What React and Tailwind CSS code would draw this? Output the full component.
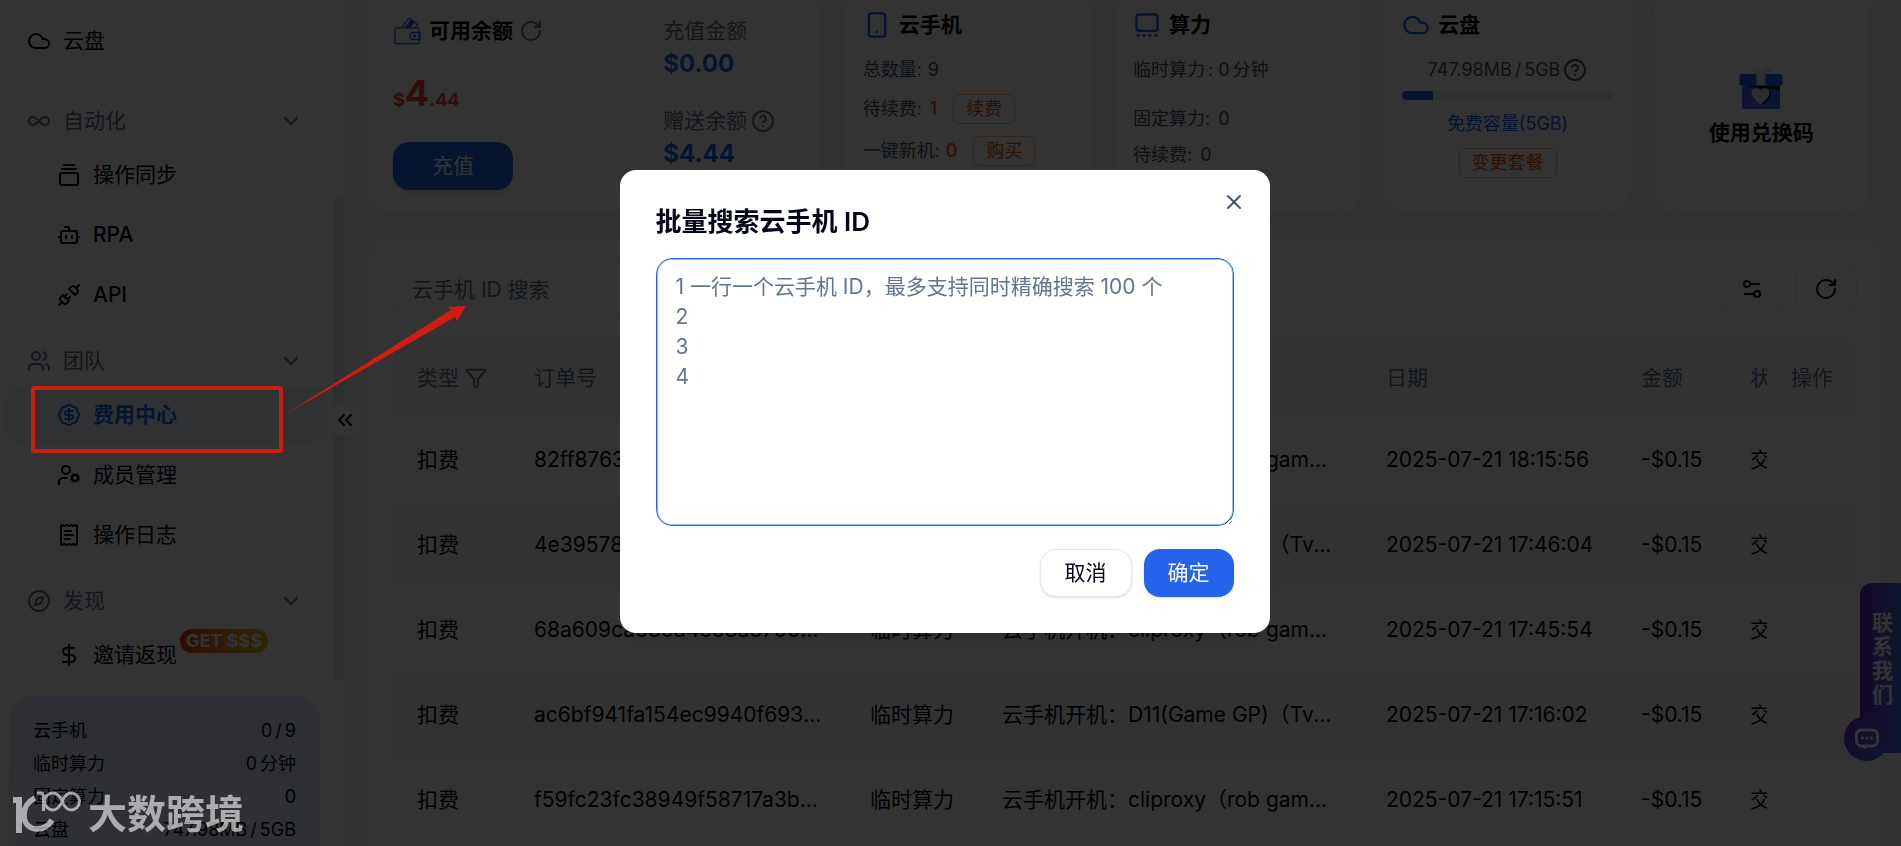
import { useState } from 'react';
import {
  Cloud, Infinity as InfinityIcon, ChevronDown, GalleryVerticalEnd, Bot, Unplug, Users,
  BadgeDollarSign, UserCog, ReceiptText, Compass, DollarSign, ChevronsLeft,
  RotateCw, CircleQuestionMark, Smartphone, GalleryThumbnails, Funnel, Settings2, X
} from 'lucide-react';

const navGroups = [
  {
    title: '自动化',
    icon: InfinityIcon,
    items: [
      { label: '操作同步', icon: GalleryVerticalEnd },
      { label: 'RPA', icon: Bot, latin: true },
      { label: 'API', icon: Unplug, latin: true },
    ]
  },
  {
    title: '团队',
    icon: Users,
    items: [
      { label: '费用中心', icon: BadgeDollarSign, active: true },
      { label: '成员管理', icon: UserCog },
      { label: '操作日志', icon: ReceiptText },
    ]
  },
  {
    title: '发现',
    icon: Compass,
    items: [
      { label: '邀请返现', icon: DollarSign, badge: 'GET $$$' },
    ]
  },
];

const usage = [
  { name: '云手机', parts: ['0', '/', '9'] },
  { name: '临时算力', parts: ['0', '分钟'] },
  { name: '固定算力', parts: ['0'] },
  { name: '云盘', parts: ['747.98MB', '/', '5GB'] },
];

const orders = [
  { id: '82ff87631b7c4f2e9a05d61c48e2', desc: '云手机开机：cliproxy（rob game phone）', date: '2025-07-21 18:15:56' },
  { id: '4e39578c0d1b4a6f8e27b93d51fa', desc: '云手机开机：D11(Game GP)（Tvgame phone）', date: '2025-07-21 17:46:04' },
  { id: '68a609ca63cd4c68a8790f1b27ce', desc: '云手机开机：cliproxy（rob game phone）', date: '2025-07-21 17:45:54' },
  { id: 'ac6bf941fa154ec9940f693d10b7', desc: '云手机开机：D11(Game GP)（Tvgame phone）', date: '2025-07-21 17:16:02' },
  { id: 'f59fc23fc38949f58717a3bd04e9', desc: '云手机开机：cliproxy（rob game phone）', date: '2025-07-21 17:15:51' },
];

function WalletIcon() {
  return (
    <svg viewBox="0 0 28 28" className="w-7 h-7 mr-0.5 text-[#2563eb]" fill="none" stroke="currentColor" strokeWidth="1.300" strokeLinejoin="round">
      <path d="M2 12.500c0-1 .7-1.700 1.700-1.700h20.600c1 0 1.700.7 1.700 1.700V25c0 1-.7 1.700-1.700 1.700H3.700C2.700 26.700 2 26 2 25z" />
      <path d="M8.500 10.500 15 1.800c.4-.5 1-.6 1.500-.2l7.500 5.600c.5.400.6 1 .2 1.500l-1.500 2" />
      <path d="m12.500 10.500 5.800-7.300 2.600 2-4.300 5.300z" fill="currentColor" />
      <path d="M27 15.500h-6.500a3.500 3.500 0 0 0 0 7H27z" />
      <circle cx="21.500" cy="19" r="1" />
    </svg>
  );
}

function GiftIcon() {
  return (
    <svg viewBox="0 0 44 44" className="w-11 h-11">
      <path d="M22 9c-6 0-11-2-11-5.500S19 0 22 6c3-6 11-6 11-2.500S28 9 22 9z" fill="#e2e8f0" />
      <rect x="3" y="20" width="38" height="23" rx="1.500" fill="#3b6bf0" />
      <rect x="0.500" y="8" width="43" height="11.500" rx="2" fill="#2563eb" />
      <rect x="17.500" y="8" width="9" height="11.500" fill="#e2e8f0" />
      <path d="M3 19.500h38v5z" fill="#000" />
      <path d="M23 39c9-6 9-10 8.500-13-1-4-6-5-8-1z" fill="#000" />
      <path d="M21.500 38.500c-6-4.500-9-8-9-12 0-5 7-6 9-1.500 2-4.500 9-3.500 9 1.500 0 4-3 7.500-9 12z" fill="#d8dee9" />
    </svg>
  );
}

function OutlineTag({ children }) {
  return (
    <button className="h-[30px] px-3 rounded-md border border-[#fb923c]/70 text-[#ea580c] text-lg leading-none">
      {children}
    </button>
  );
}

function CardTitle({ icon: Icon, children }) {
  return (
    <h2 className="flex items-center gap-2 h-7 mt-[11px] text-[21px] font-bold text-black">
      <Icon className="w-7 h-7 text-[#2563eb]" strokeWidth={2} />
      {children}
    </h2>
  );
}

function Sidebar() {
  return (
    <aside className="relative w-[345px] shrink-0 bg-white border-r border-slate-200">
      <nav>
        <a href="#disk" className="flex items-center gap-3 h-14 mt-[13px] mb-3 pl-[27px] text-[21px] text-slate-950">
          <Cloud className="w-6 h-6" />
          云盘
        </a>
        <hr className="border-slate-100 mb-3.5" />
        {navGroups.map((group) => (
          <div key={group.title} className="mb-[13px]">
            <button className="flex items-center gap-3 w-full h-[50px] mb-px pl-[27px] pr-[41px] text-[21px] text-slate-500">
              <group.icon className="w-6 h-6" />
              <span className="flex-1 text-left">{group.title}</span>
              <ChevronDown className="w-6 h-6" />
            </button>
            <div className="space-y-1 ml-1 mr-[18px]">
              {group.items.map((item) => (
                <a
                  key={item.label}
                  href="#nav"
                  className={`relative flex items-center gap-3 h-14 pl-[53px] rounded-2xl text-[21px] ${item.active ? 'bg-slate-100 text-[#2563eb] font-bold' : 'text-slate-950'} ${item.latin ? 'font-medium' : ''}`}
                >
                  <item.icon className="w-6 h-6" />
                  {item.label}
                  {item.badge && (
                    <span className="absolute left-44 top-0.5 h-6 px-1.5 flex items-center rounded-full bg-gradient-to-r from-[#dc3a1a] via-[#f08a24] to-[#e3b32c] text-white text-lg font-bold">
                      {item.badge}
                    </span>
                  )}
                </a>
              ))}
            </div>
          </div>
        ))}
      </nav>
      <dl className="ml-[9px] mr-6 pt-[18px] pb-5 px-6 rounded-3xl bg-gradient-to-b from-indigo-100 to-indigo-50 text-lg text-slate-950">
        {usage.map(({ name, parts }) => (
          <div key={name} className="flex items-center justify-between h-[33px]">
            <dt>{name}</dt>
            <dd className="flex gap-[3px]">
              {parts.map((part) => <span key={part}>{part}</span>)}
            </dd>
          </div>
        ))}
      </dl>
      <div className="absolute right-0 top-[198px] w-[11px] h-[482px] rounded-full bg-slate-200" />
      <button aria-label="收起" className="absolute -right-[18px] top-[403px] z-10 w-[34px] h-[34px] rounded-full bg-white shadow flex items-center justify-center text-black">
        <ChevronsLeft className="w-6 h-6" />
      </button>
    </aside>
  );
}

const cardClass = 'rounded-b-3xl bg-white shadow-[0_4px_20px_rgba(0,0,0,0.06)]';

function SummaryCards() {
  return (
    <div className="grid grid-cols-[450fr_248fr_245fr_244fr_215fr] gap-6 h-[214px] mr-3 whitespace-nowrap">
      <section className={`grid grid-cols-[258fr_192fr] ${cardClass}`}>
        <div className="pl-6 border-r border-dashed border-slate-200">
          <h2 className="flex items-center gap-1.5 h-7 mt-[17px] text-[21px] font-bold text-black">
            <WalletIcon />
            可用余额
            <RotateCw className="w-6 h-6 text-slate-500" />
          </h2>
          <p className="flex items-baseline h-12 mt-6 text-[#ef4444] font-bold text-lg">
            $<span className="text-4xl leading-[48px]">4</span>.44
          </p>
          <button className="w-[120px] h-12 mt-[25px] rounded-2xl bg-[#2563eb] text-white text-[21px] shadow-md">充值</button>
        </div>
        <div className="pl-9">
          <p className="h-8 mt-[15px] leading-8 text-[21px] text-slate-500">充值金额</p>
          <p className="h-8 mt-px leading-8 text-2xl font-bold text-[#2563eb]">$0.00</p>
          <p className="flex items-center gap-1 h-8 mt-[25px] text-[21px] text-slate-500">
            赠送余额 <CircleQuestionMark className="w-6 h-6" />
          </p>
          <p className="h-8 mt-px leading-8 text-2xl font-bold text-[#2563eb]">$4.44</p>
        </div>
      </section>

      <section className={`pl-[19px] text-lg text-slate-600 ${cardClass}`}>
        <CardTitle icon={Smartphone}>云手机</CardTitle>
        <p className="flex items-center gap-1.5 h-[30px] mt-4">总数量: <span>9</span></p>
        <p className="flex items-center h-[30px] mt-[9px]">
          待续费: <span className="ml-2 mr-4 text-[#ea580c] font-medium">1</span> <OutlineTag>续费</OutlineTag>
        </p>
        <p className="flex items-center h-[30px] mt-3">
          一键新机: <span className="ml-1.5 mr-4 text-[#ea580c] font-medium">0</span> <OutlineTag>购买</OutlineTag>
        </p>
      </section>

      <section className={`text-lg text-slate-600 ${cardClass}`}>
        <div className="px-[17px]">
          <CardTitle icon={GalleryThumbnails}>算力</CardTitle>
          <p className="flex items-center gap-[3px] h-[30px] mt-4">临时算力 <span>:</span> <span className="ml-0.5">0</span> <span>分钟</span></p>
        </div>
        <hr className="border-dashed border-slate-200 mt-2 mb-2.5" />
        <div className="px-[17px]">
          <p className="flex items-center gap-2 h-[30px]">固定算力: <span>0</span></p>
          <p className="flex items-center gap-2 h-[30px] mt-1.5">待续费: <span>0</span></p>
        </div>
      </section>

      <section className={`px-[17px] flex flex-col items-center text-lg text-slate-600 ${cardClass}`}>
        <div className="self-start">
          <CardTitle icon={Cloud}>云盘</CardTitle>
        </div>
        <p className="flex items-center gap-[3px] h-[30px] mt-4">
          <span>747.98MB</span> <span>/</span> <span>5GB</span> <CircleQuestionMark className="w-6 h-6" />
        </p>
        <div className="w-full h-[9px] mt-1.5 rounded-full bg-slate-200 overflow-hidden">
          <div className="h-full bg-[#2563eb]" style={{ width: `${(747.98 / 5120) * 100}%` }} />
        </div>
        <p className="h-[30px] leading-[30px] my-[9px] text-[#2563eb]">免费容量(5GB)</p>
        <OutlineTag>变更套餐</OutlineTag>
      </section>

      <section className={`flex flex-col items-center ${cardClass}`}>
        <button className="flex flex-col items-center mt-[66px] text-[21px] leading-[30px] font-bold text-black">
          <GiftIcon />
          <span className="mt-2">使用兑换码</span>
        </button>
      </section>
    </div>
  );
}

function OrderTable() {
  return (
    <div className="overflow-hidden rounded-t-2xl">
      <table className="table-fixed w-[1564px] min-w-full text-left text-[21px] text-slate-950">
        <colgroup>
          <col className="w-[117px]" />
          <col className="w-[336px]" />
          <col className="w-[132px]" />
          <col className="w-[384px]" />
          <col className="w-[255px]" />
          <col className="w-[109px]" />
          <col className="w-[141px]" />
          <col className="w-[90px]" />
        </colgroup>
        <thead>
          <tr className="h-[78px] bg-slate-50 text-slate-500 whitespace-nowrap">
            <th className="pl-6 font-normal">
              <span className="flex items-center gap-1.5">类型 <Funnel className="w-[22px] h-[22px]" /></span>
            </th>
            <th className="px-6 font-normal">订单号</th>
            <th className="px-6 font-normal">分类</th>
            <th className="px-6 font-normal">描述</th>
            <th className="px-6 font-normal">日期</th>
            <th className="px-6 font-normal">金额</th>
            <th className="px-6 font-normal">状态</th>
            <th className="px-6 font-normal sticky right-0 bg-slate-50 shadow-[-4px_0_8px_rgba(0,0,0,0.06)]">操作</th>
          </tr>
        </thead>
        <tbody>
          {orders.map((o) => (
            <tr key={o.id} className="group h-[85px] odd:bg-white even:bg-slate-50 whitespace-nowrap">
              <td className="px-6">扣费</td>
              <td className="px-6 truncate">{o.id}</td>
              <td className="px-6">临时算力</td>
              <td className="px-6 truncate">{o.desc}</td>
              <td className="px-6">{o.date}</td>
              <td className="px-6">-$0.15</td>
              <td className="px-6">交易成功</td>
              <td className="sticky right-0 group-odd:bg-white group-even:bg-slate-50 shadow-[-4px_0_8px_rgba(0,0,0,0.06)]" />
            </tr>
          ))}
        </tbody>
      </table>
    </div>
  );
}

function SearchDialog({ onClose }) {
  return (
    <div className="fixed inset-0 z-40 flex items-start justify-center bg-black/80 pt-[170px] pr-3">
      <div role="dialog" aria-modal="true" aria-labelledby="dialog-title" className="relative w-full max-w-[650px] p-9 rounded-2xl bg-white shadow-lg">
        <h1 id="dialog-title" className="h-8 leading-8 text-[26px] font-semibold text-slate-950">批量搜索云手机 ID</h1>
        <button onClick={onClose} aria-label="关闭" className="absolute right-6 top-5 text-slate-600">
          <X className="w-6 h-6" strokeWidth={2} />
        </button>
        <textarea
          aria-labelledby="dialog-title"
          placeholder={'1 一行一个云手机 ID，最多支持同时精确搜索 100 个\n2\n3\n4'}
          className="block w-full h-[268px] mt-5 px-[19px] py-[13px] rounded-2xl border border-[#2563eb] ring-1 ring-inset ring-blue-300 outline-none text-[21px] leading-[30px] placeholder:text-slate-500"
        />
        <div className="flex justify-end gap-3 mt-[23px] text-[21px]">
          <button onClick={onClose} className="h-12 px-6 rounded-2xl border border-slate-200 bg-white text-slate-950 shadow-sm">取消</button>
          <button onClick={onClose} className="h-12 px-6 rounded-2xl bg-[#2563eb] text-slate-50 shadow">确定</button>
        </div>
      </div>
    </div>
  );
}

function Watermark() {
  return (
    <div className="fixed left-3 bottom-3 z-50 flex items-end gap-1.5 text-white opacity-60 pointer-events-none">
      <svg viewBox="0 0 70 44" className="w-[70px] h-11" fill="none" stroke="currentColor">
        <path d="M1 7h9v36H4V13H1z" fill="currentColor" stroke="none" />
        <path d="M23 8c-6 3-11 9-11 17 0 9 6 14 13 14 7 0 12-4 15-9" strokeWidth="5.500" />
        <path d="M25 3h5l1.500 3v15" strokeWidth="3" />
        <path d="M50 11c-2-5-5-8-9-8a8.500 8.500 0 0 0 0 17c4 0 7-4 9-8.500S55 3 59 3a8.500 8.500 0 0 1 0 17c-4 0-7-4-9-9z" strokeWidth="3" />
      </svg>
      <span className="text-[39px] leading-10 font-bold">大数跨境</span>
    </div>
  );
}

export default function App() {
  const [open, setOpen] = useState(true);

  return (
    <div className="h-screen flex overflow-hidden bg-slate-50 font-[Inter,'Noto_Sans_CJK_SC',sans-serif]">
      <Sidebar />

      <main className="flex-1 min-w-0 pl-6 pr-5">
        <SummaryCards />
        <section className="mt-6 p-6 rounded-3xl bg-white shadow-[0_4px_20px_rgba(0,0,0,0.06)]">
          <div className="flex items-center gap-3 mb-[23px]">
            <input
              type="text"
              aria-label="云手机 ID 搜索"
              placeholder="云手机 ID 搜索"
              onFocus={() => setOpen(true)}
              className="w-80 h-[54px] px-[18px] mr-auto rounded-2xl border border-slate-200 bg-white text-[21px] placeholder:text-slate-500"
            />
            <button aria-label="列设置" className="w-[62px] h-[54px] flex items-center justify-center rounded-2xl border border-slate-200 text-slate-950">
              <Settings2 className="w-6 h-6" />
            </button>
            <button aria-label="刷新" className="w-[62px] h-[54px] flex items-center justify-center rounded-2xl border border-slate-200 text-slate-950">
              <RotateCw className="w-6 h-6" />
            </button>
          </div>
          <OrderTable />
        </section>
      </main>

      {/* Contact tab */}
      <button className="fixed right-0 bottom-[93px] z-30 w-[41px] h-[170px] pt-7 flex flex-col items-center rounded-l-xl bg-gradient-to-r from-[#6a1fc0] to-[#3f6fe8] text-white text-[21px] leading-6 font-bold">
        <span className="w-[21px] ml-1">联系我们</span>
        <span className="absolute -left-4 -bottom-2 w-[45px] h-[45px] rounded-full bg-gradient-to-br from-[#6a1fc0] to-[#3f6fe8] flex items-center justify-center">
          <svg viewBox="0 0 24 24" className="w-6 h-6" fill="none" stroke="currentColor" strokeWidth="3">
            <rect x="1.500" y="3" width="21" height="16" rx="5" />
            <path d="m8 19 2 3 2-3z" fill="currentColor" strokeWidth="1" />
            <path d="M7.500 11h.1M12 11h.1M16.500 11h.1" strokeLinecap="round" strokeWidth="3" />
          </svg>
        </span>
      </button>

      {open && <SearchDialog onClose={() => setOpen(false)} />}

      {/* Highlight box and arrow */}
      <svg viewBox="0 0 480 480" className="fixed left-0 top-0 z-50 w-[480px] h-[480px] pointer-events-none" fill="#d01c12">
        <rect x="33" y="388" width="248" height="63" rx="1" fill="none" stroke="#c81e14" strokeWidth="4" />
        <path d="M284 415 451 310l-3-3 18-1-9 15-2-4z" />
      </svg>
      <Watermark />
    </div>
  );
}
